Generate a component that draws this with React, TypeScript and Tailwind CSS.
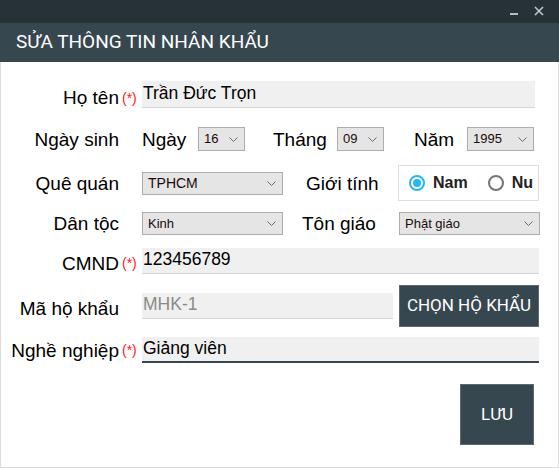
const label = "text-[19px] text-black leading-none";
const fieldFont = { fontFamily: '"Liberation Sans", Arial, sans-serif' };

function Chevron() {
  return (
    <svg width="9" height="5" viewBox="0 0 9 5" className="shrink-0">
      <path d="M0.5 0.5 L4.5 4.5 L8.5 0.5" fill="none" stroke="#6b6b6b" strokeWidth="1" />
    </svg>
  );
}

function Select({ value, w, size = "text-[13px]" }: { value: string; w: string; size?: string }) {
  return (
    <div
      className={`${w} h-full flex items-center justify-between pl-[5px] pr-[6px] bg-[#e5e5e5] border border-[#adadad] ${size} text-[#1a0a0a]`}
      style={fieldFont}
    >
      <span>{value}</span>
      <Chevron />
    </div>
  );
}

function Req() {
  return <span className="text-[#ff1a1a] text-[14px] ml-[3px] w-[20px] leading-none" style={fieldFont}>(*)</span>;
}

function Label({ text, req }: { text: string; req?: boolean }) {
  return (
    <div className="flex items-center shrink-0">
      <div className={`w-[118px] text-right whitespace-nowrap ${label}`}>{text}</div>
      {req ? <Req /> : <span className="w-[23px]" />}
    </div>
  );
}

export default function App() {
  return (
    <div
      className="w-[559px] h-[468px] flex flex-col bg-white"
      style={{ fontFamily: '"Liberation Sans", Arial, sans-serif' }}
    >
      {/* title bar */}
      <div className="h-[23px] bg-[#263238] flex items-start justify-end shrink-0">
        <div className="w-[8px] h-[2px] bg-[#b8bcbe] mt-[13px] mr-[16px]" />
        <svg width="10" height="10" viewBox="0 0 10 10" className="mt-[6px] mr-[15px]">
          <path d="M1 1 L9 9 M9 1 L1 9" stroke="#c5c8ca" strokeWidth="1.6" />
        </svg>
      </div>
      {/* header */}
      <div className="h-[39px] bg-[#37474f] flex items-center pl-[16px] shrink-0">
        <span className="text-white text-[19px]" style={{ fontFamily: "Roboto, sans-serif" }}>
          SỬA THÔNG TIN NHÂN KHẨU
        </span>
      </div>

      <div className="flex-1 border-x border-b border-[#dcdcdc] flex flex-col">
        {/* Họ tên */}
        <div className="mt-[19px] h-[27px] flex items-center">
          <div className="mt-[6px]">
            <Label text="Họ tên" req />
          </div>
          <div className="w-[393px] h-full bg-[#f0f0f0] border-b border-[#d5d5d5] flex items-center pl-[1px] text-[17.5px] text-black pb-[2px]">
            Trần Đức Trọn
          </div>
        </div>

        {/* Ngày sinh */}
        <div className="mt-[19px] h-[24px] flex items-center">
          <Label text="Ngày sinh" />
          <span className={`w-[56px] ${label}`}>Ngày</span>
          <Select value="16" w="w-[47px]" />
          <span className={`ml-[28px] w-[64px] ${label}`}>Tháng</span>
          <Select value="09" w="w-[47px]" />
          <span className={`ml-[30px] w-[53px] ${label}`}>Năm</span>
          <Select value="1995" w="w-[67px]" />
        </div>

        {/* Quê quán / Giới tính */}
        <div className="mt-[14px] h-[36px] flex items-center">
          <Label text="Quê quán" />
          <div className="h-[23px]">
            <Select value="TPHCM" w="w-[141px]" size="text-[14px]" />
          </div>
          <span className={`ml-[23px] w-[92px] ${label}`}>Giới tính</span>
          <div className="w-[141px] h-full border border-[#dedede] flex items-center pl-[10px]">
            <span className="w-[16px] h-[16px] rounded-full border-2 border-[#29b6f6] flex items-center justify-center">
              <span className="w-[8px] h-[8px] rounded-full bg-[#29b6f6]" />
            </span>
            <span className="ml-[8px] text-[16px] font-bold text-[#222]">Nam</span>
            <span className="ml-[20px] w-[16px] h-[16px] rounded-full border-2 border-[#757575]" />
            <span className="ml-[8px] text-[16px] font-bold text-[#222]">Nu</span>
          </div>
        </div>

        {/* Dân tộc / Tôn giáo */}
        <div className="mt-[11px] h-[23px] flex items-center">
          <Label text="Dân tộc" />
          <Select value="Kinh" w="w-[141px]" />
          <span className={`ml-[19px] w-[97px] ${label}`}>Tôn giáo</span>
          <Select value="Phật giáo" w="w-[141px]" />
        </div>

        {/* CMND */}
        <div className="mt-[13px] h-[26px] flex items-center">
          <div className="mt-[4px]">
            <Label text="CMND" req />
          </div>
          <div className="w-[397px] h-full bg-[#f0f0f0] border-b border-[#d5d5d5] flex items-center pl-[1px] text-[17.5px] text-black pb-[2px]">
            123456789
          </div>
        </div>

        {/* Mã hộ khẩu */}
        <div className="mt-[11px] h-[42px] flex items-center">
          <div className="mt-[4px]">
            <Label text="Mã hộ khẩu" />
          </div>
          <div className="w-[251px] h-[26px] bg-[#f0f0f0] border-b border-[#d5d5d5] flex items-center pl-[1px] text-[17.5px] text-[#8a8a8a] pb-[2px]">
            MHK-1
          </div>
          <div
            className="ml-[6px] w-[140px] h-full bg-[#37474f] border border-[#5c6a70] flex items-center justify-center text-white text-[17px]"
            style={{ fontFamily: "Roboto, sans-serif" }}
          >
            CHỌN HỘ KHẨU
          </div>
        </div>

        {/* Nghề nghiệp */}
        <div className="mt-[10px] h-[26px] flex items-center">
          <Label text="Nghề nghiệp" req />
          <div className="w-[397px] h-full bg-[#f0f0f0] border-b-2 border-[#37474f] flex items-center pl-[1px] text-[17.5px] text-black pb-[2px]">
            Giảng viên
          </div>
        </div>

        {/* Lưu */}
        <div className="mt-[21px] flex justify-end pr-[24px]">
          <div
            className="w-[74px] h-[61px] bg-[#37474f] border border-[#5c6a70] flex items-center justify-center text-white text-[17px]"
            style={{ fontFamily: "Roboto, sans-serif" }}
          >
            LƯU
          </div>
        </div>
      </div>
    </div>
  );
}
